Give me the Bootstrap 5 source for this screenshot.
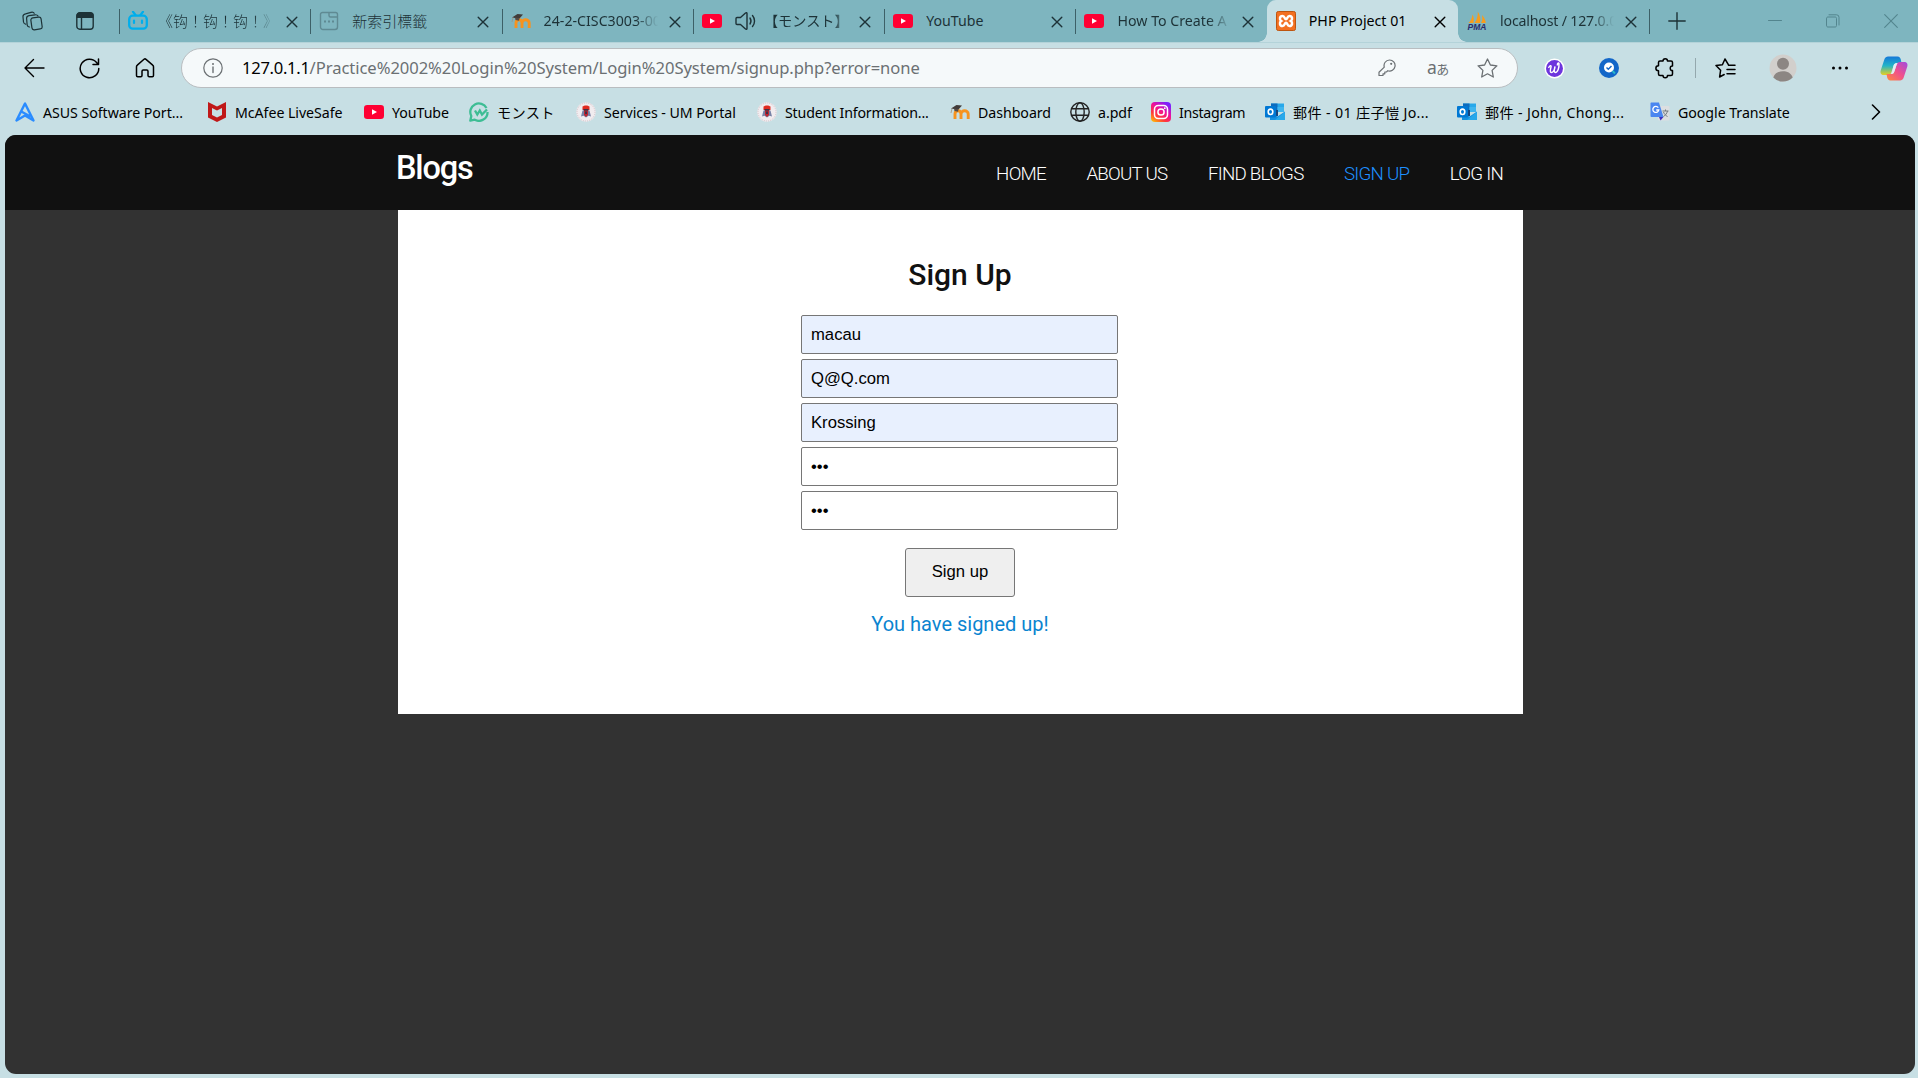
<!DOCTYPE html>
<html lang="en">
<head>
<meta charset="utf-8">
<title>PHP Project 01</title>
<link rel="stylesheet" href="https://cdn.jsdelivr.net/npm/bootstrap@5.3.0/dist/css/bootstrap.min.css">
<style>
html,body{height:100%;overflow:hidden}
body{background:#c7dfe4;font-family:"Noto Sans","Noto Sans CJK TC","Noto Sans CJK JP",sans-serif;font-size:14.2px;line-height:20px;color:#000;width:1918px;height:1078px}
svg{display:block;flex:none}
.ln{fill:none;stroke:currentColor;stroke-width:1.4;stroke-linecap:round;stroke-linejoin:round}
.strip{height:42px;background:#7eb5bf;color:#1d3237;border-bottom:0}
.strip-start{width:119px;padding-left:22px;gap:33px}
.tab{width:191.3px;height:42px;padding-left:9px;position:relative;flex:none}
.tab::before{content:"";position:absolute;left:0;top:9px;width:1px;height:25px;background:#3d6067}
.tab.on::before,.tab.after::before{display:none}
.tab.on{background:#c7dfe4;border-radius:9px 9px 0 0;color:#000}
.tab.on::after{content:"";position:absolute;left:-9px;right:-9px;bottom:0;height:9px;background:radial-gradient(circle at 0 0,transparent 8.5px,#c7dfe4 9px) left/9px 9px no-repeat,radial-gradient(circle at 100% 0,transparent 8.5px,#c7dfe4 9px) right/9px 9px no-repeat}
.tab-title{width:114px;margin-left:13px;overflow:hidden;white-space:nowrap;height:22px;line-height:22px}
.tab-title.fade-out{-webkit-mask-image:linear-gradient(90deg,#000 80%,transparent 100%);mask-image:linear-gradient(90deg,#000 80%,transparent 100%)}
.tab-title.half{width:78px;margin-left:14px}
.tab-title.half i{font-style:normal;margin-left:-6px}
.tab-title.snug{letter-spacing:-.2px}
.han{font-family:"Noto Sans CJK TC",sans-serif;font-size:15px;font-weight:300}
.shut{margin-left:11px;margin-top:1px}
.tab-end{width:1px;height:25px;background:#3d6067;margin-top:1px}
.win{color:#53858e}
.bar{height:51px;border-top:1px solid #b4d3d9}
.addr{width:1337px;height:40px;border:1px solid #b9bdc0;border-radius:20px;background:#f5f9fa;color:#6b7073;margin-left:26px}
.url{font-size:16.6px;line-height:24px;margin-left:19px;white-space:nowrap;letter-spacing:-.06px}
.url b{font-weight:400;color:#000;letter-spacing:-.3px}
.marks{height:42px;padding-left:15px}
.bm{gap:8px;white-space:nowrap;flex:none;height:38px;letter-spacing:-.05px}
.bm span{margin-top:1px}
.bm .mixed{letter-spacing:.33px}
.bm:nth-child(1),.bm:nth-child(10){width:192px}
.bm:nth-child(2){width:157px}.bm:nth-child(3){width:105px}.bm:nth-child(4){width:107px}
.bm:nth-child(5){width:181px}.bm:nth-child(6),.bm:nth-child(11){width:193px}
.bm:nth-child(7){width:120px}.bm:nth-child(8){width:81px}.bm:nth-child(9){width:114px}.bm:nth-child(12){width:220px}
.view{margin:0 3px 0 5px;height:939px;border-radius:11px;background:#323232;overflow:hidden;font-family:Roboto,sans-serif}
.site-head{height:75px;background:#111}
.wrap{width:1125px;margin-left:393px}
.logo{color:#fff;font-size:32.5px;font-weight:500;line-height:40px;letter-spacing:-1.15px;margin:-9px 0 0 -2px}
.site-nav{gap:40.4px;padding-right:20px;font-size:18.75px;font-weight:300;color:#fff;letter-spacing:-.75px;margin-top:3px}
.site-nav .cur{color:#1e90ff}
.sheet{background:#fff;height:504px;padding:46px 1px 0 0}
.sheet h2{font-size:30px;font-weight:500;line-height:38px;color:#111;margin:0 0 21px;letter-spacing:0}
.fld{width:317px;height:39px;border:1px solid #767676;border-radius:2px;padding:0 9px;font:16.67px "Liberation Sans",Arial,sans-serif;color:#000;margin:0 1px 5px 0;display:block;background:#fff}
.fld.auto{background:#e8f0fe}
.go{width:110px;height:49px;border:1px solid #767676;border-radius:3px;background:#efefef;font:16.67px "Liberation Sans",Arial,sans-serif;color:#000;margin-top:13px;padding:0 0 2px}
.done{color:#0a84d0;font-size:20px;line-height:24px;margin-top:15px}
</style>
<script src="https://cdn.jsdelivr.net/npm/bootstrap@5.3.0/dist/js/bootstrap.bundle.min.js"></script>
</head>
<body>
<svg width="0" height="0" class="position-absolute">
<defs>
<linearGradient id="ig" x1="0" y1="1" x2=".7" y2="0"><stop offset="0" stop-color="#ffd000"/><stop offset=".35" stop-color="#ff3a3a"/><stop offset=".65" stop-color="#f0109a"/><stop offset="1" stop-color="#7a20ff"/></linearGradient>
<linearGradient id="cpa" x1="0" y1="0" x2="0" y2="1"><stop offset="0" stop-color="#1478d8"/><stop offset=".5" stop-color="#22b4c8"/><stop offset="1" stop-color="#e8d020"/></linearGradient>
<linearGradient id="cpb" x1="1" y1="0" x2="0" y2="1"><stop offset="0" stop-color="#a04ae0"/><stop offset=".5" stop-color="#f0508c"/><stop offset="1" stop-color="#ff8a3c"/></linearGradient>
<symbol id="yt" viewBox="0 0 20 20"><rect y="3" width="20" height="14" rx="3.2" fill="#ff0033"/><path d="M8 7.2v5.6l5-2.8z" fill="#fff"/></symbol>
<symbol id="x" viewBox="0 0 12 12"><path class="ln" d="M1.200 1.200l9.600 9.600M10.800 1.200l-9.600 9.600"/></symbol>
<symbol id="moodle" viewBox="0 0 20 20"><path d="M5 17v-5c0-4.300 6-4.300 6 0v5M11 12c0-4.300 7.200-4.300 7.200 0v5" fill="none" stroke="#f7931e" stroke-width="2.900"/><path d="M1 6.500L6.500 3l5.500.6L8.500 7.500 4 7z" fill="#423c3a"/><path d="M4 6.500l4.500.8-.4 2.400L4.500 9z" fill="#554b46"/><path d="M2 6.500L1 11" stroke="#a0917d" stroke-width=".8"/></symbol>
<symbol id="um" viewBox="0 0 20 20"><circle cx="10" cy="10" r="9.800" fill="#f1ecef"/><circle cx="10" cy="10" r="9" fill="none" stroke="#d3c2c8" stroke-dasharray="1 1"/><path d="M6.500 4.500C8 3 12 3 13.500 4.500V8h-7z" fill="#e02a20"/><path d="M6.500 8.500h7l1.500 6-2.500-.8L10 15.500l-2.500-1.800-2.500.8z" fill="#7782a6"/><path d="M8 8h4v5l-2 2-2-2z" fill="#bd2431"/><path d="M7.500 7h5v1.500h-5zM9 9.500h2v2.500H9z" fill="#3b3249"/></symbol>
<symbol id="ol" viewBox="0 0 20 20"><path d="M6 1.500h13V8H6z" fill="#28a8ea"/><path d="M6 1.500h6.500V8H6z" fill="#0f6cbd"/><path d="M12.500 5H19v5h-6.500z" fill="#3fb5ee"/><path d="M6 8h7v6H6z" fill="#14447d"/><path d="M5 10.500l7.500 4L20 9.500V18H5z" fill="#1490df"/><path d="M10 18l10-8.200V18z" fill="#28a8ea"/><rect y="4" width="11" height="11.500" rx="1" fill="#0078d4"/><ellipse cx="5.500" cy="9.800" rx="2.300" ry="2.700" fill="none" stroke="#fff" stroke-width="1.600"/></symbol>
</defs></svg>

<header class="strip d-flex align-items-center">
  <div class="strip-start d-flex align-items-center">
    <svg width="21" height="20" viewBox="0 0 21 20"><g class="ln" style="stroke-width:1.200"><rect x="9.300" y="6.500" width="10.300" height="12" rx="2.200" transform="rotate(-8 14 12)"/><path d="M7.500 16C5.500 16 5.300 15 5.100 13.500L4.600 7.500C4.500 6 5.300 5 7 4.700l6-.9c1.500-.2 2.500.2 3 1.200M3.600 13.200C2 13 1.700 12 1.500 11L1 6C.8 4.300 1.800 3.200 3.500 2.800L9 1.300c1.500-.4 2.700 0 3.200 1"/></g></svg>
    <svg width="18" height="18" viewBox="0 0 18 18"><rect class="ln" x=".8" y=".8" width="16.400" height="16.400" rx="3"/><path d="M.5 3.500a3 3 0 013-3h11a3 3 0 013 3V6H.5z" fill="currentColor"/><path class="ln" d="M5.500 6v11"/></svg>
  </div>
  <div class="tab d-flex align-items-center"><svg width="20" height="20" viewBox="0 0 20 20"><path d="M5 .8L7.500 4M15 .8L12.500 4" stroke="#00aeec" stroke-width="2.200" stroke-linecap="round"/><rect x="1.200" y="4.700" width="17.600" height="13" rx="3.500" fill="none" stroke="#00aeec" stroke-width="2.300"/><path d="M6 9.500v2.500M14 9.500v2.500" stroke="#00aeec" stroke-width="2.200" stroke-linecap="round"/></svg><span class="tab-title fade-out han" lang="zh-Hant"><span style="margin-left:-3px">《钩！钩！钩！》</span></span><svg class="shut" width="12" height="12"><use href="#x"/></svg></div>
  <div class="tab d-flex align-items-center"><svg width="20" height="20" viewBox="0 0 20 20" color="#5f8a93"><path class="ln" d="M3.500 1.500h13a2 2 0 012 2v12.500a2.500 2.500 0 01-2.500 2.500H4A2.500 2.500 0 011.500 16V3.500a2 2 0 012-2zM10 1.500v3c0 1 .5 1.500 1.500 1.500h7"/><path d="M5 9.500h2v2H5zM9 9.500h2v2H9zM13 9.500h2v2h-2z" fill="currentColor"/></svg><span class="tab-title han" lang="zh-Hant">新索引標籤</span><svg class="shut" width="12" height="12"><use href="#x"/></svg></div>
  <div class="tab d-flex align-items-center"><svg width="20" height="20"><use href="#moodle"/></svg><span class="tab-title fade-out">24-2-CISC3003-00</span><svg class="shut" width="12" height="12"><use href="#x"/></svg></div>
  <div class="tab d-flex align-items-center"><svg width="20" height="20"><use href="#yt"/></svg><svg width="21" height="20" viewBox="0 0 21 20" style="margin-left:13px"><path class="ln" d="M1 7.500v5c0 .6.400 1 1 1h3.500l5 4.500c.7.600 1.500.3 1.500-.6V2.600c0-.9-.8-1.200-1.500-.6l-5 4.500H2c-.6 0-1 .4-1 1zM15 7c1.200 1.800 1.200 4.200 0 6M17.500 4.500c2.700 3.200 2.700 7.800 0 11"/></svg><span class="tab-title fade-out half" lang="ja"><i>【モンスト】</i></span><svg class="shut" width="12" height="12"><use href="#x"/></svg></div>
  <div class="tab d-flex align-items-center"><svg width="20" height="20"><use href="#yt"/></svg><span class="tab-title">YouTube</span><svg class="shut" width="12" height="12"><use href="#x"/></svg></div>
  <div class="tab d-flex align-items-center"><svg width="20" height="20"><use href="#yt"/></svg><span class="tab-title fade-out">How To Create A</span><svg class="shut" width="12" height="12"><use href="#x"/></svg></div>
  <div class="tab on d-flex align-items-center"><svg width="20" height="20" viewBox="0 0 20 20"><rect x=".5" y=".5" width="19" height="19" rx="1.800" fill="#f37021" stroke="#bd5510"/><path d="M6.500 5C9 5 8.500 8.200 10 8.200S11 5 13.500 5c3 0 3.300 3.800 1.300 5 2 1.200 1.700 5-1.300 5-2.500 0-2-3.200-3.500-3.200S9 15 6.500 15c-3 0-3.300-3.800-1.300-5-2-1.200-1.700-5 1.300-5z" fill="none" stroke="#fff" stroke-width="2.500"/></svg><span class="tab-title">PHP Project 01</span><svg class="shut" width="12" height="12"><use href="#x"/></svg></div>
  <div class="tab after d-flex align-items-center"><svg width="20" height="20" viewBox="0 0 20 20"><path d="M1.500 12C4 10 5 7 5.500 3.500 7 6 7 9 6.500 12zM7.500 12C10 9 11 5 10.800.5c2.400 4 2.900 8 2.200 11.500zM14 12c1.500-2.500 1.500-5 1-8 2.500 2.500 3.500 5.500 3.800 8z" fill="#f89c1c"/><text x="10" y="19" font-family="Liberation Sans" font-size="8.500" font-weight="bold" font-style="italic" fill="#2b2b6b" text-anchor="middle">PMA</text></svg><span class="tab-title fade-out snug">localhost / 127.0.0</span><svg class="shut" width="12" height="12"><use href="#x"/></svg></div>
  <div class="tab-end"></div>
  <svg width="18" height="18" viewBox="0 0 18 18" style="margin-left:18px"><path class="ln" d="M9 .8v16.400M.8 9h16.400"/></svg>
  <div class="win d-flex align-items-center ms-auto pe-4">
    <svg width="14" height="14" viewBox="0 0 14 14" style="margin-right:44px"><path class="ln" style="stroke-width:1" d="M.5 6.500h13"/></svg>
    <svg width="14" height="14" viewBox="0 0 14 14" style="margin-right:44px"><path class="ln" style="stroke-width:1" d="M.5 4.500c0-1 .5-1.500 1.500-1.500h7c1 0 1.500.5 1.500 1.500v7c0 1-.5 1.500-1.500 1.500H2c-1 0-1.500-.5-1.500-1.500zM3 .8h7.500a2.500 2.500 0 012.500 2.500V11"/></svg>
    <svg width="14" height="14" viewBox="0 0 14 14" style="margin-right:-4px"><path class="ln" style="stroke-width:1.100" d="M.7.7l12.600 12.600M13.300.7L.7 13.300"/></svg>
  </div>
</header>

<div class="bar d-flex align-items-center">
  <svg width="21" height="20" viewBox="0 0 21 20" style="margin-left:24px"><path class="ln" d="M20 10H1M9.500 1.500L1 10l8.500 8.500"/></svg>
  <svg width="21" height="21" viewBox="0 0 21 21" style="margin-left:34px"><path class="ln" style="stroke-width:1.500" d="M19.800 10.500a9.300 9.300 0 11-2-5.800l1.400 1.600M19.500 1v5.500H14"/></svg>
  <svg width="20" height="20" viewBox="0 0 20 20" style="margin-left:35px"><path class="ln" style="stroke-width:1.500" d="M1.500 8.800c0-.7.300-1.300.8-1.700L9 1.300c.6-.5 1.400-.5 2 0l6.700 5.800c.5.400.8 1 .8 1.700v8.700c0 .7-.5 1.200-1.200 1.200h-3.100c-.7 0-1.200-.5-1.200-1.200v-4.300c0-.7-.5-1.200-1.200-1.200H8.200c-.7 0-1.200.5-1.200 1.200v4.300c0 .7-.5 1.200-1.200 1.200H2.700c-.7 0-1.200-.5-1.200-1.200z"/></svg>
  <div class="addr d-flex align-items-center">
    <svg width="20" height="20" viewBox="0 0 20 20" style="margin-left:21px"><circle class="ln" style="stroke-width:1.200" cx="10" cy="10" r="9.200"/><path class="ln" d="M10 9v5.500"/><circle cx="10" cy="6" r="1" fill="currentColor"/></svg>
    <span class="url"><b>127.0.1.1</b>/Practice%2002%20Login%20System/Login%20System/signup.php?error=none</span>
    <svg class="ms-auto" width="18" height="18" viewBox="0 0 18 18"><path class="ln" style="stroke-width:1.200" d="M11.500 1a5.500 5.500 0 11-1.700 10.700L8.500 13H6.800v1.800H5v1.700H1v-3.200l5.300-5.200A5.500 5.500 0 0111.500 1z"/><circle cx="13.200" cy="4.800" r="1.100" fill="currentColor"/></svg>
    <span lang="ja" style="margin-left:31px;width:22px;white-space:nowrap;font-size:17.5px;letter-spacing:-.5px">a<span style="font-size:13px">あ</span></span>
    <svg width="21" height="20" viewBox="0 0 21 20" style="margin:0 19px 0 28px"><path class="ln" style="stroke-width:1.300" d="M10.500 1l2.900 6 6.500.8-4.800 4.600 1.200 6.600-5.800-3.200L4.700 19l1.200-6.600L1.100 7.800 7.600 7z"/></svg>
  </div>
  <svg width="21" height="21" viewBox="0 0 21 21" style="margin-left:26px"><circle cx="10.500" cy="10.500" r="10" fill="#fff"/><circle cx="10.500" cy="10.500" r="8.500" fill="#6d35dd"/><path d="M4.500 10c1.500-3 3-3 2.500-1-1 4-1 5.500.5 5.500 2 0 3.500-4 3.500-6-.5 2-1.500 6 .3 6 2.500 0 4-5 3.700-9-.5-1.500-2 0-1.500 2" fill="none" stroke="#fff" stroke-width="1.400"/></svg>
  <svg width="20" height="20" viewBox="0 0 20 20" style="margin-left:34px"><circle cx="10" cy="10" r="10" fill="#1266c8"/><circle cx="10" cy="9.500" r="5" fill="#fff"/><path d="M7.500 9.500l1.800 1.800 3.200-3.300" fill="none" stroke="#1266c8" stroke-width="1.400"/><path d="M13.500 13l2.500 2.500" stroke="#29b8c8" stroke-width="2"/></svg>
  <svg width="20" height="21" viewBox="0 0 20 21" style="margin-left:36px"><path class="ln" style="stroke-width:1.500" d="M5 3h3c0-3 4.500-3 4.500 0H16c1 0 1.500.5 1.500 1.500V8c-3-.5-3 5 0 4.500V16c0 1-.5 1.500-1.500 1.500h-3.500c0 3-4.500 3-4.500 0H5c-1 0-1.500-.5-1.500-1.500v-3.300c-3.500 0-3.500-5 0-5V4.500C3.500 3.500 4 3 5 3z"/></svg>
  <div style="width:1px;height:20px;background:#94a8ad;margin-left:20px"></div>
  <svg width="21" height="20" viewBox="0 0 21 20" style="margin-left:19px"><path class="ln" style="stroke-width:1.500" d="M13.500 6.800L10 1 7.400 6.700 1 7.600l4.600 4.700L4.600 19l4.600-2.500M13.500 7.200H20M12 11.500h8M12 15.800h8"/></svg>
  <svg width="28" height="28" viewBox="0 0 28 28" style="margin-left:33px"><circle cx="14" cy="14" r="13.500" fill="#d2cfcc"/><circle cx="14" cy="9.800" r="6" fill="#8c8683"/><path d="M4.300 23.500C6 18.700 10 17.300 14 17.300s8 1.400 9.700 6.200a13.500 13.500 0 01-19.400 0z" fill="#8c8683"/></svg>
  <svg width="18" height="4" viewBox="0 0 18 4" style="margin-left:34px"><circle cx="2.500" cy="2" r="1.500"/><circle cx="9" cy="2" r="1.500"/><circle cx="15.500" cy="2" r="1.500"/></svg>
  <svg width="28" height="27" viewBox="0 0 28 27" style="margin-left:31px"><path d="M8 1.500h9.500c2 0 3 1.500 3.300 3L21.500 8H17c-2 0-3 1.500-3.500 3l-2 6c-.6 1.700-1.500 3-3.500 3H4c-3 0-4-2-3.300-4.500L4.500 4C5 2.500 6.500 1.500 8 1.500z" fill="url(#cpa)"/><path d="M20 25.500h-9.500c-2 0-3-1.500-3.300-3L6.500 19H11c2 0 3-1.500 3.500-3l2-6c.6-1.700 1.500-3 3.500-3h4c3 0 4 2 3.300 4.500L23.500 23c-.5 1.500-2 2.500-3.500 2.500z" fill="url(#cpb)"/><path d="M13.500 10.500c.5-1.500 1.500-2.500 3.500-2.500h.5c-.6.800-1 2-1.300 3l-2 6c-.5 1.300-1 2-2.200 2h-1c.5-.8 1-1.700 1.200-2.500z" fill="#e5eef5"/></svg>
</div>

<nav class="marks d-flex">
  <div class="bm d-flex align-items-center"><svg width="20" height="20" viewBox="0 0 20 20"><path d="M10 1.500L1.500 18.500l8.500-5 8.500 5zM6.300 9.500l9 5" fill="none" stroke="#2a8cff" stroke-width="2.400" stroke-linejoin="round"/></svg><span>ASUS Software Port...</span></div>
  <div class="bm d-flex align-items-center"><svg width="20" height="20" viewBox="0 0 20 20"><path d="M1 0l9 4.500L19 0v15.500L10 20l-9-4.500z" fill="#c01818"/><path d="M5 6l5 2.500L15 6v7l-5 2.500L5 13z" fill="#c7dfe4"/></svg><span>McAfee LiveSafe</span></div>
  <div class="bm d-flex align-items-center"><svg width="20" height="20"><use href="#yt"/></svg><span>YouTube</span></div>
  <div class="bm d-flex align-items-center"><svg width="20" height="20" viewBox="0 0 20 20"><path d="M17.500 6A8.500 8.500 0 102.300 14L1.300 18.700l4.500-1A8.500 8.500 0 0018.500 10" fill="none" stroke="#3dbd94" stroke-width="2.300" stroke-linejoin="round"/><path d="M6 8.500l2.300 4 2.500-4 2.200 4 5-5" fill="none" stroke="#3dbd94" stroke-width="2.300"/></svg><span lang="ja" class="mixed">モンスト</span></div>
  <div class="bm d-flex align-items-center"><svg width="20" height="20"><use href="#um"/></svg><span>Services - UM Portal</span></div>
  <div class="bm d-flex align-items-center"><svg width="20" height="20"><use href="#um"/></svg><span style="letter-spacing:-.18px">Student Information...</span></div>
  <div class="bm d-flex align-items-center"><svg width="20" height="20"><use href="#moodle"/></svg><span>Dashboard</span></div>
  <div class="bm d-flex align-items-center"><svg width="20" height="20" viewBox="0 0 20 20" color="#222"><g class="ln"><circle cx="10" cy="10" r="9.200"/><ellipse cx="10" cy="10" rx="4.200" ry="9.200"/><path d="M1.700 6.800h16.600M1.700 13.200h16.600"/></g></svg><span>a.pdf</span></div>
  <div class="bm d-flex align-items-center"><svg width="20" height="20" viewBox="0 0 20 20"><rect width="20" height="20" rx="4" fill="url(#ig)"/><rect x="3.500" y="3.500" width="13" height="13" rx="3.800" fill="none" stroke="#fff" stroke-width="1.500"/><circle cx="10" cy="10" r="3.100" fill="none" stroke="#fff" stroke-width="1.500"/><circle cx="13.800" cy="6.200" r=".9" fill="#fff"/></svg><span style="letter-spacing:-.3px">Instagram</span></div>
  <div class="bm d-flex align-items-center"><svg width="20" height="20"><use href="#ol"/></svg><span lang="zh-Hant" class="mixed">郵件 - 01 庄子愷 Jo...</span></div>
  <div class="bm d-flex align-items-center"><svg width="20" height="20"><use href="#ol"/></svg><span lang="zh-Hant" class="mixed">郵件 - John, Chong...</span></div>
  <div class="bm d-flex align-items-center"><svg width="20" height="20" viewBox="0 0 20 20"><rect x="8" y="4" width="11.500" height="14.500" rx="1.200" fill="#dcdfe1"/><path d="M1.500.5H9L13.500 15H1.500C.8 15 .5 14.500.5 14V1.500c0-.6.4-1 1-1z" fill="#4a86f0"/><path d="M9 15h4.500L10.500 18.500z" fill="#4032c0"/><path d="M8.300 5.700a3 3 0 10.500 2.300H6.200" fill="none" stroke="#fff" stroke-width="1.300"/><path d="M12.500 9h6M15.500 7.500V9M17.500 9c-.5 2.500-2.500 4.500-4 5.500M13.500 10c.5 1.800 2.500 3.800 4 4.500" fill="none" stroke="#72797d"/></svg><span>Google Translate</span></div>
  <svg width="10" height="16" viewBox="0 0 10 16" class="ms-auto" style="margin-right:37px;margin-top:11px"><path class="ln" style="stroke-width:1.600" d="M1.500 1L8.500 8l-7 7"/></svg>
</nav>

<main class="view">
  <div class="site-head">
    <div class="wrap h-100 d-flex align-items-center justify-content-between">
      <div class="logo">Blogs</div>
      <div class="site-nav d-flex"><span>HOME</span><span>ABOUT US</span><span>FIND BLOGS</span><span class="cur">SIGN UP</span><span>LOG IN</span></div>
    </div>
  </div>
  <section class="wrap sheet d-flex flex-column align-items-center">
    <h2>Sign Up</h2>
    <input class="fld auto" type="text" value="macau">
    <input class="fld auto" type="text" value="Q@Q.com">
    <input class="fld auto" type="text" value="Krossing">
    <input class="fld" type="password" value="123">
    <input class="fld" type="password" value="123">
    <button class="go" type="button">Sign up</button>
    <p class="done mb-0">You have signed up!</p>
  </section>
</main>
</body>
</html>
